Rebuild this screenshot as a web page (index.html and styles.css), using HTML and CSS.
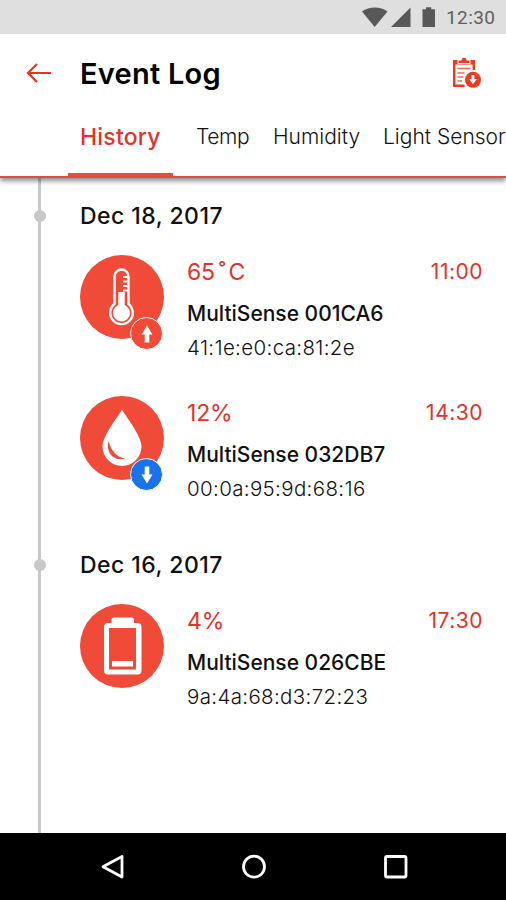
FILE: index.html
```html
<!DOCTYPE html>
<html lang="en">

<head>
    <meta charset="UTF-8">
    <meta name="viewport" content="width=device-width, initial-scale=1.0">
    <title>Event Log</title>
    <link rel="stylesheet" href="styles.css">
</head>

<body>
    <div class="screen">
        <div class="status-bar">
            <svg class="status-icons" width="76" height="34" viewBox="0 0 76 34">
                <path d="M0 11.5C7 6.2 18.500 6.200 25.500 11.500L12.700 27Z" />
                <path d="M48.500 7.500V27H29Z" />
                <path d="M60.500 9.200H64V7.300H69.200V9.200H73V27H60.500Z" />
            </svg>
            <span class="clock">12:30</span>
        </div>

        <header class="header">
            <div class="title-row">
                <svg class="back" width="26" height="22" viewBox="0 0 26 22">
                    <path d="M25 11H2M11 2L2 11L11 20" />
                </svg>
                <h1>Event Log</h1>
                <svg class="export" width="30" height="34" viewBox="0 0 30 34">
                    <path class="sheet" d="M2.200 6V29.700H12.500M21.800 6V14" />
                    <path class="clip" d="M1 4H5.500V8H18.500V4H23V8.500H1ZM6.500 7V4.500H9.500A2.500 2.800 0 0 1 14.500 4.500H17.500V7Z" />
                    <path class="lines" d="M5.500 12.500H18.500M5.500 17H12.500M5.500 21H11M5.500 25H10" />
                    <circle cx="21" cy="23.800" r="8" />
                    <path class="arrow" d="M19.600 19H22.400V23H25L21 28L17 23H19.600Z" />
                </svg>
            </div>
            <nav class="tabs">
                <a class="tab active">History</a>
                <a class="tab temp">Temp</a>
                <a class="tab humidity">Humidity</a>
                <a class="tab light">Light Sensor</a>
            </nav>
        </header>

        <main class="timeline">
            <section class="day">
                <h2>Dec 18, 2017</h2>
                <div class="event">
                    <div class="event-icon">
                        <svg width="84" height="84" viewBox="0 0 84 84">
                            <path class="stroke" d="M34.500 49V21.500A7 7 0 0 1 48.500 21.500V49A11.300 11.300 0 1 1 34.500 49Z" />
                            <circle class="solid" cx="41.500" cy="58" r="8.500" />
                            <path class="solid" d="M38.300 37H44.700V54H38.300Z" />
                            <path class="ticks" d="M43 22H48M43 26.500H48M43 31H48M43 35.500H48" />
                        </svg>
                        <span class="badge up">
                            <svg width="14" height="18" viewBox="0 0 14 18"><path d="M7 0.500L12.500 9.500H9.300V17.500H4.700V9.500H1.500Z" /></svg>
                        </span>
                    </div>
                    <div class="event-info">
                        <div class="reading"><span class="value">65<span class="degree">˚</span>C</span><span class="time">11:00</span></div>
                        <div class="name">MultiSense 001CA6</div>
                        <div class="mac">41:1e:e0:ca:81:2e</div>
                    </div>
                </div>
                <div class="event">
                    <div class="event-icon">
                        <svg width="84" height="84" viewBox="0 0 84 84">
                            <path class="solid" d="M42 13.500C44.500 19 61.500 39 61.500 50.500A19.500 19.500 0 0 1 22.500 50.500C22.500 39 39.500 19 42 13.500Z" />
                            <path class="shine" d="M28.500 45C25.500 57 34 66 45.500 62.500C37.500 61.500 31.500 56 28.500 45Z" />
                        </svg>
                        <span class="badge down">
                            <svg width="14" height="18" viewBox="0 0 14 18"><path d="M7 17.500L12.500 8.500H9.300V0.500H4.700V8.500H1.500Z" /></svg>
                        </span>
                    </div>
                    <div class="event-info">
                        <div class="reading"><span class="value">12%</span><span class="time">14:30</span></div>
                        <div class="name">MultiSense 032DB7</div>
                        <div class="mac">00:0a:95:9d:68:16</div>
                    </div>
                </div>
            </section>

            <section class="day">
                <h2>Dec 16, 2017</h2>
                <div class="event">
                    <div class="event-icon">
                        <svg width="84" height="84" viewBox="0 0 84 84">
                            <path class="battery" fill-rule="evenodd" d="M34 13.500H51.500Q54 13.500 54 16V19H57.500Q61.500 19 61.500 23V66.500Q61.500 70.500 57.500 70.500H28Q24 70.500 24 66.500V23Q24 19 28 19H31.500V16Q31.500 13.500 34 13.500ZM29 24V65.500H56V24Z" />
                            <path class="solid" d="M32 57H53V62.500H32Z" />
                        </svg>
                    </div>
                    <div class="event-info">
                        <div class="reading"><span class="value">4%</span><span class="time">17:30</span></div>
                        <div class="name">MultiSense 026CBE</div>
                        <div class="mac">9a:4a:68:d3:72:23</div>
                    </div>
                </div>
            </section>
        </main>

        <footer class="nav-bar">
            <svg width="26" height="28" viewBox="0 0 26 28"><path d="M22 3.500V24L3 13.700Z" /></svg>
            <svg width="26" height="28" viewBox="0 0 26 28"><circle cx="12" cy="13.700" r="10.500" /></svg>
            <svg width="26" height="28" viewBox="0 0 26 28"><rect x="2.500" y="3.500" width="20.500" height="20.500" rx="1.500" /></svg>
        </footer>
    </div>
</body>

</html>
```

FILE: styles.css
```css
* {
    box-sizing: border-box;
}

body {
    margin: 0;
    font-family: 'Inter', sans-serif;
    background-color: #fff;
    color: #111;
}

.screen {
    display: flex;
    flex-direction: column;
    width: 506px;
    height: 900px;
    overflow: hidden;
}

.status-bar {
    display: flex;
    align-items: center;
    height: 34px;
    padding-left: 362px;
    background-color: #dfdfdf;
}

.status-icons {
    fill: #585858;
}

.clock {
    margin-left: 8px;
    font-family: 'Roboto', sans-serif;
    font-size: 19px;
    letter-spacing: 0.4px;
    color: #606060;
}

/* Header and tabs */
.header {
    display: flex;
    flex-direction: column;
    height: 144px;
    border-bottom: 2px solid #d94f45;
    box-shadow: 0 3px 5px rgba(0, 0, 0, 0.45);
    clip-path: inset(0 0 -12px 0);
    z-index: 1;
}

.title-row {
    display: flex;
    align-items: center;
    height: 78px;
    padding: 0 24px 0 26px;
}

.back {
    fill: none;
    stroke: #e83323;
    stroke-width: 2.2;
}

h1 {
    flex: 1;
    margin: 0 0 0 28px;
    font-size: 29px;
    font-weight: 600;
    letter-spacing: 0.25px;
    color: #000;
}

.export {
    fill: #ee3a24;
}

.export .sheet {
    fill: none;
    stroke: #ee3a24;
    stroke-width: 2.4;
}

.export .lines {
    fill: none;
    stroke: #f26a58;
    stroke-width: 1.5;
}

.export .arrow {
    fill: #fff;
}

.tabs {
    display: flex;
    height: 64px;
    padding-left: 68px;
}

.tab {
    height: 64px;
    line-height: 49px;
    font-size: 21px;
    font-weight: 300;
    white-space: nowrap;
}

.tab.active {
    width: 105px;
    padding-left: 12px;
    border-bottom: 3px solid #ef4a38;
    line-height: 51px;
    font-size: 23px;
    font-weight: 500;
    letter-spacing: 0.2px;
    color: #e5322a;
}

.tab.temp {
    width: 100px;
    padding-left: 23px;
    letter-spacing: -0.4px;
}

.tab.humidity {
    width: 110px;
}

/* Event timeline */
.timeline {
    flex: 1;
    margin-left: 38px;
    padding: 23px 23px 0 39px;
    border-left: 3px solid #c8c8c8;
}

.day {
    margin-bottom: 44px;
}

h2 {
    position: relative;
    margin: 0 0 24px;
    line-height: 30px;
    font-size: 23px;
    font-weight: 500;
    letter-spacing: 0.45px;
}

h2::before {
    content: '';
    position: absolute;
    left: -46px;
    top: 9px;
    width: 12px;
    height: 12px;
    border-radius: 50%;
    background-color: #c8c8c8;
}

.event {
    display: flex;
    height: 110px;
}

.event + .event {
    margin-top: 31px;
}

.event-icon {
    position: relative;
    width: 84px;
    height: 84px;
    border-radius: 50%;
    background-color: #f04b38;
}

.event-icon .solid,
.event-icon .battery {
    fill: #fff;
}

.event-icon .stroke {
    fill: none;
    stroke: #fff;
    stroke-width: 2.4;
}

.event-icon .ticks {
    stroke: #fff;
    stroke-width: 1.8;
}

.event-icon .shine {
    fill: #f04b38;
}

.badge {
    position: absolute;
    left: 50px;
    top: 62px;
    display: flex;
    align-items: center;
    justify-content: center;
    width: 33px;
    height: 33px;
    border: 1.5px solid #fff;
    border-radius: 50%;
}

.badge svg {
    fill: #fff;
}

.badge.up {
    background-color: #f04b38;
}

.badge.down {
    background-color: #1a73e8;
}

.event-info {
    flex: 1;
    margin-left: 23px;
}

.reading {
    display: flex;
    justify-content: space-between;
    line-height: 34px;
    color: #e5322a;
}

.value {
    font-size: 23px;
    letter-spacing: -0.2px;
}

.degree {
    margin: 0 3px 0 4px;
}

.time {
    font-size: 21px;
    letter-spacing: 0.5px;
}

.name {
    margin-top: 8px;
    line-height: 34px;
    font-size: 21px;
    font-weight: 500;
}

.mac {
    line-height: 34px;
    font-size: 20.5px;
    font-weight: 300;
    letter-spacing: 0.35px;
}

/* System buttons */
.nav-bar {
    display: flex;
    justify-content: space-between;
    height: 67px;
    padding: 20px 97px 0 100px;
    background-color: #000;
}

.nav-bar svg {
    fill: none;
    stroke: #fff;
    stroke-width: 2.8;
    stroke-linejoin: round;
}
```
